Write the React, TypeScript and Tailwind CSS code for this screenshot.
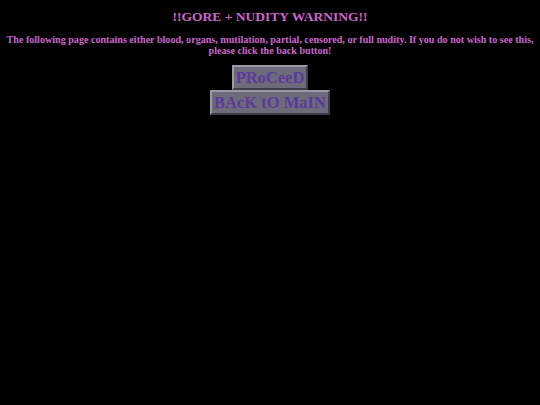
import React from 'react';

const WarnButton: React.FC<{ label: string }> = ({ label }) => (
  <button className="bg-[#6d6b79] border-2 border-t-[#9a99a8] border-l-[#9a99a8] border-b-[#3e3d48] border-r-[#3e3d48] px-[2px] text-[16.5px] leading-[21px] font-bold text-[#5a3a9a] font-['Liberation_Serif',serif]">
    {label}
  </button>
);

export default function App() {
  return (
    <div className="min-h-screen bg-black text-[#cc66cc] font-['Liberation_Serif',serif] font-bold text-center pt-[8px]">
      <h1 className="text-[13.5px] leading-[17px] font-bold">!!GORE + NUDITY WARNING!!</h1>
      <p className="mt-[9px] text-[10.1px] leading-[11px] px-[4px]">
        The following page contains either blood, organs, mutilation, partial, censored, or full nudity. If you do not wish to see this,
        <br />
        please click the back button!
      </p>
      <div className="mt-[9px] flex flex-col items-center">
        <WarnButton label="PRoCeeD" />
        <WarnButton label="BAcK tO MaIN" />
      </div>
    </div>
  );
}
